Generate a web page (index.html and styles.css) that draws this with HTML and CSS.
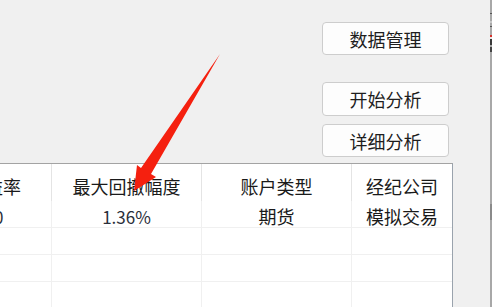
FILE: index.html
```html
<!DOCTYPE HTML>
<html lang="zh">
<head>
    <meta charset="utf-8">
    <title>账户分析</title>
    <link rel="stylesheet" href="styles.css">
</head>
<body>
<div class="screen">
    <div class="main">
        <div class="controls">
            <button class="btn btn-manage">数据管理</button>
            <button class="btn btn-start">开始分析</button>
            <button class="btn btn-detail">详细分析</button>
        </div>
        <div class="grid-wrap">
            <div class="grid">
                <div class="th">收益率</div>
                <div class="th">最大回撤幅度</div>
                <div class="th">账户类型</div>
                <div class="th last">经纪公司</div>

                <div class="td num">10</div>
                <div class="td num">1.36%</div>
                <div class="td">期货</div>
                <div class="td last">模拟交易</div>

                <div class="td"></div>
                <div class="td"></div>
                <div class="td"></div>
                <div class="td last"></div>

                <div class="td"></div>
                <div class="td"></div>
                <div class="td"></div>
                <div class="td last"></div>

                <div class="td"></div>
                <div class="td"></div>
                <div class="td"></div>
                <div class="td last"></div>
            </div>
        </div>
    </div>
    <div class="edge">
        <div class="e-gap1"></div>
        <div class="e-dark1"></div>
        <div class="e-gap2"></div>
        <div class="e-light"></div>
        <div class="e-gap3"></div>
        <div class="e-dark1"></div>
        <div class="e-gap4"></div>
        <div class="e-red"></div>
        <div class="e-white"></div>
        <div class="e-dark2"></div>
        <div class="e-gap5"></div>
        <div class="e-dark3"></div>
        <div class="e-gap6"></div>
        <div class="e-thumb"></div>
    </div>

    <!-- 标注箭头 -->
    <svg class="arrow" width="492" height="307" viewBox="0 0 492 307">
        <polygon points="220,54 151,174 156,177 134,191 137,165 141,168" fill="#f5200f"/>
    </svg>
</div>
</body>
</html>
```

FILE: styles.css
```css
html, body{
    margin: 0;
    padding: 0;
}
body{
    background: #f0f0f0;
    font-family: "Noto Sans CJK SC", "Microsoft YaHei", sans-serif;
    color: #1a1a1a;
}
.screen{
    position: relative;
    width: 492px;
    height: 307px;
    display: flex;
    overflow: hidden;
}
.main{
    width: 490px;
    display: flex;
    flex-direction: column;
    overflow: hidden;
}
.controls{
    display: flex;
    flex-direction: column;
    align-items: flex-start;
    flex-shrink: 0;
    padding: 22px 0 6px 322px;
}
.btn{
    width: 127px;
    height: 33px;
    padding: 0;
    border: 1px solid #cdcdcd;
    border-radius: 4px;
    background: #fdfdfd;
    font-family: inherit;
    font-size: 18px;
    line-height: 30px;
    color: #1e1e1e;
}
.btn-start{
    margin-top: 27px;
    height: 34px;
}
.btn-detail{
    margin-top: 8px;
}
.grid-wrap{
    flex: 1;
    margin-left: -63px;
    width: 516px;
    border-top: 1px solid #a3a3a3;
    border-right: 1px solid #9aa3ad;
    background: #fff;
    box-sizing: border-box;
}
.grid{
    display: grid;
    grid-template-columns: 115px 150px 150px 100px;
    grid-template-rows: 37px 27px 27px 27px 27px;
    font-size: 18px;
}
.th{
    border-right: 1px solid #e4e4e4;
    text-align: center;
    line-height: 44px;
    overflow: hidden;
}
.td{
    border-right: 1px solid #f0f0f0;
    border-bottom: 1px solid #f0f0f0;
    text-align: center;
    line-height: 31px;
    overflow: hidden;
}
.td.num{
    font-size: 17px;
    color: #2a2f3a;
}
.last{
    border-right: none;
}
.edge{
    width: 2px;
    background: #a8a8a8;
    display: flex;
    flex-direction: column;
}
.e-gap1{ height: 13px; }
.e-dark1{ height: 1px; background: #555; }
.e-gap2{ height: 7px; }
.e-light{ height: 2px; background: #c8c8c8; }
.e-gap3{ height: 3px; }
.e-gap4{ height: 8px; }
.e-red{ height: 2px; background: #d8312a; }
.e-white{ height: 2px; background: #e8e8e8; }
.e-dark2{ height: 6px; background: #3a3a3a; }
.e-gap5{ height: 2px; }
.e-dark3{ height: 5px; background: #444; }
.e-gap6{ height: 152px; }
.e-thumb{ height: 16px; background: #8a8a8a; }
.arrow{
    position: absolute;
    top: 0;
    left: 0;
    pointer-events: none;
}
```
